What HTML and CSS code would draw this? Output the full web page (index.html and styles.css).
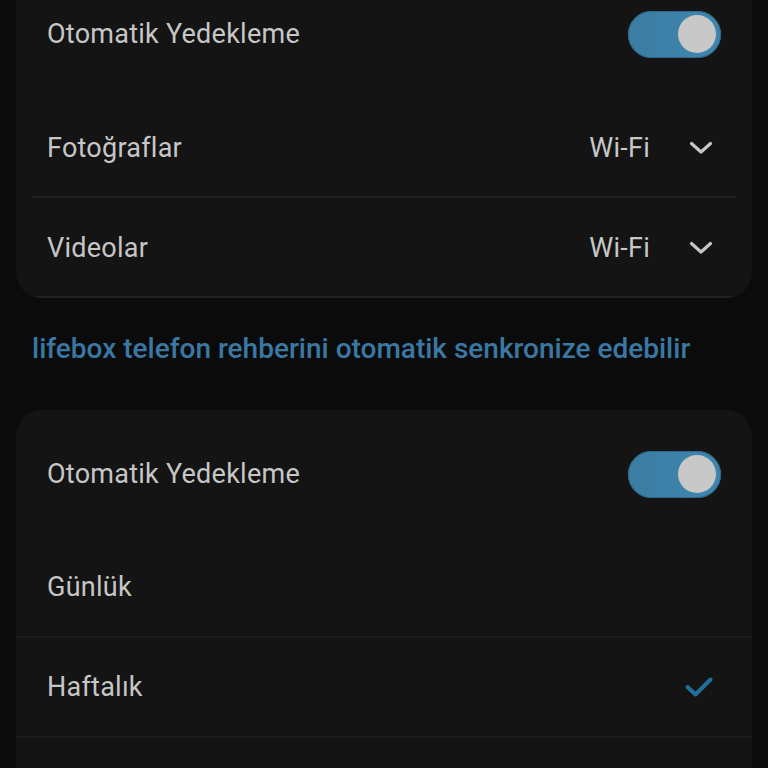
FILE: index.html
```html
<!DOCTYPE html>
<html lang="tr">
<head>
<meta charset="utf-8">
<link rel="stylesheet" href="styles.css">
</head>
<body>
<div class="page">
  <section class="card card-top">
    <div class="row row-toggle">
      <span class="label">Otomatik Yedekleme</span>
      <span class="toggle"><span class="knob"></span></span>
    </div>
    <div class="row row-inset">
      <span class="label">Fotoğraflar</span>
      <span class="value">Wi-Fi
        <svg class="chev" width="24" height="14" viewBox="0 0 24 14"><path d="M2.5 2.5 L12 11 L21.5 2.5" fill="none" stroke="#c6c6c6" stroke-width="3.2" stroke-linecap="round" stroke-linejoin="round"/></svg>
      </span>
    </div>
    <div class="row row-inset">
      <span class="label">Videolar</span>
      <span class="value">Wi-Fi
        <svg class="chev" width="24" height="14" viewBox="0 0 24 14"><path d="M2.5 2.5 L12 11 L21.5 2.5" fill="none" stroke="#c6c6c6" stroke-width="3.2" stroke-linecap="round" stroke-linejoin="round"/></svg>
      </span>
    </div>
  </section>

  <p class="note">lifebox telefon rehberini otomatik senkronize edebilir</p>

  <section class="card card-bottom">
    <div class="row row-toggle">
      <span class="label">Otomatik Yedekleme</span>
      <span class="toggle"><span class="knob"></span></span>
    </div>
    <div class="row row-full">
      <span class="label">Günlük</span>
    </div>
    <div class="row row-full">
      <span class="label">Haftalık</span>
      <svg class="check" width="30" height="24" viewBox="0 0 30 24"><path d="M3.5 12 L11.5 19.5 L26.5 4.5" fill="none" stroke="#1f6f9b" stroke-width="4" stroke-linecap="round" stroke-linejoin="round"/></svg>
    </div>
    <div class="row row-empty"></div>
  </section>
</div>
</body>
</html>
```

FILE: styles.css
```css
html, body {
  margin: 0;
  padding: 0;
  background: #0b0b0b;
  overflow: hidden;
  height: 768px;
}

body {
  font-family: Roboto, "Liberation Sans", sans-serif;
  color: #c6c6c6;
}

.page {
  margin-top: -30px;
  padding: 0 16px;
}

.card {
  background: #141414;
  border-radius: 26px;
  overflow: hidden;
}

.row {
  display: flex;
  align-items: center;
  justify-content: space-between;
  height: 100px;
  box-sizing: border-box;
  padding: 0 31px;
  position: relative;
}

.row-toggle {
  height: 128px;
}

.row-inset::after {
  content: "";
  position: absolute;
  left: 16px;
  right: 16px;
  bottom: 0;
  height: 2px;
  background: #222222;
}

.row-full {
  border-bottom: 2px solid #1c1c1c;
}

.row-empty {
  height: 60px;
}

.label {
  font-size: 27px;
  letter-spacing: 0.25px;
  color: #c6c6c6;
}

.value {
  display: flex;
  align-items: center;
  gap: 39px;
  font-size: 27px;
  letter-spacing: 0.25px;
  color: #c6c6c6;
  margin-right: 8px;
}

.chev {
  display: block;
}

.toggle {
  width: 93px;
  height: 47px;
  border-radius: 24px;
  background: linear-gradient(90deg, #3b7da3, #3f86af);
  box-shadow: inset 0 0 0 1px #2f6a8d;
  display: flex;
  align-items: center;
  justify-content: flex-end;
  padding-right: 5px;
  box-sizing: border-box;
}

.knob {
  width: 38px;
  height: 38px;
  border-radius: 50%;
  background: #c8c8c8;
}

.note {
  margin: 0;
  height: 112px;
  box-sizing: border-box;
  padding: 0 0 12px 16px;
  display: flex;
  align-items: center;
  font-size: 28px;
  font-weight: 500;
  color: #3a78a3;
  letter-spacing: 0;
}

.check {
  display: block;
  margin-right: 7px;
}
```
